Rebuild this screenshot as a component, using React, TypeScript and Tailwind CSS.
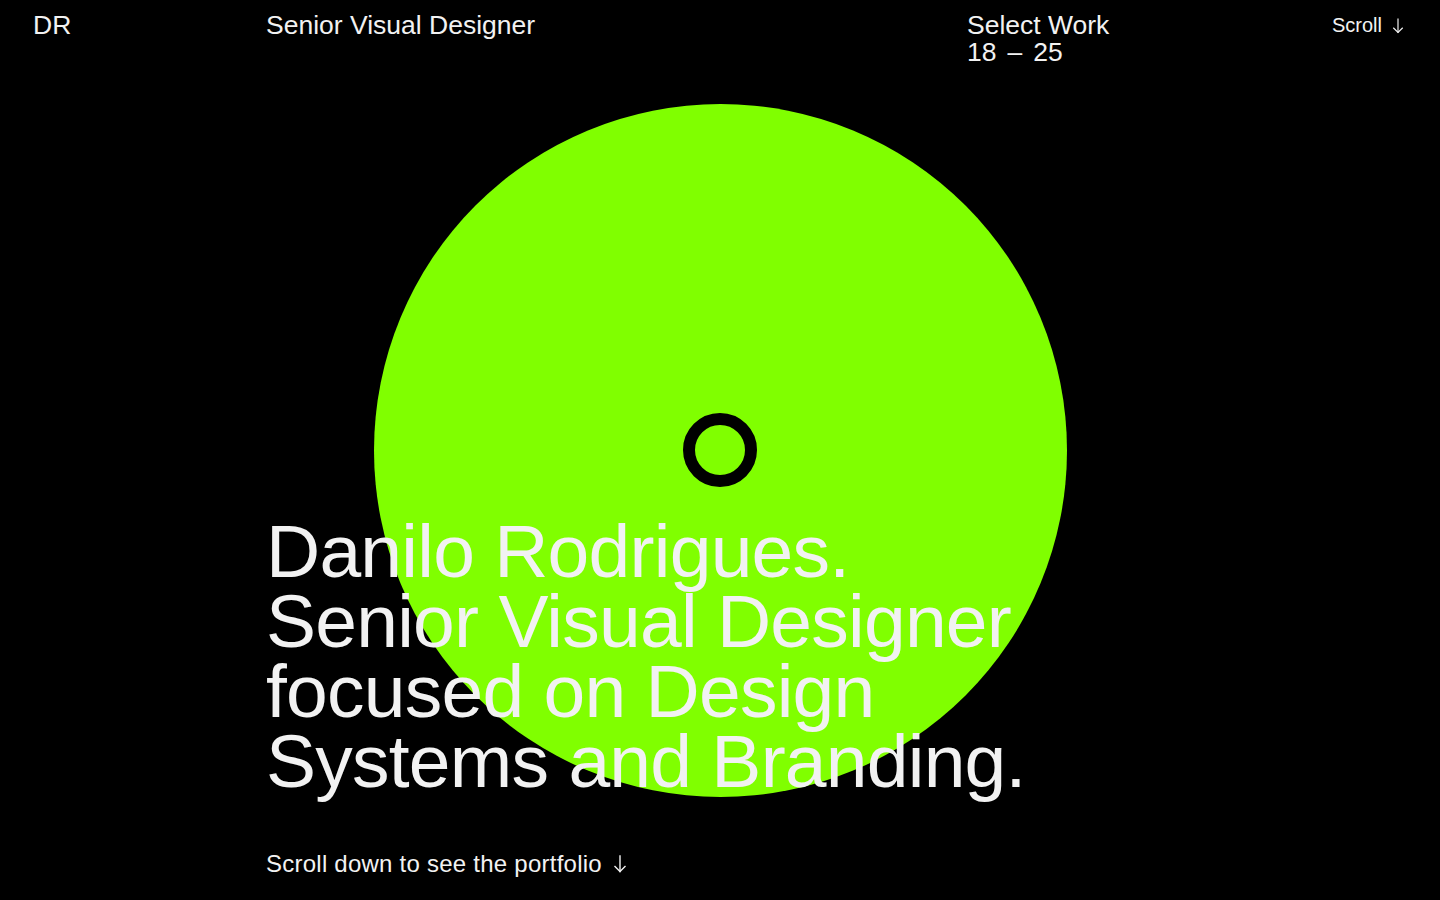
import React from "react";

function ArrowDown({ className = "" }: { className?: string }) {
  return (
    <svg
      viewBox="0 0 14 18"
      fill="none"
      stroke="currentColor"
      strokeWidth={1.4}
      strokeLinecap="square"
      className={className}
    >
      <path d="M7 1v15.5" />
      <path d="M1.5 11 7 16.5 12.5 11" strokeLinecap="butt" />
    </svg>
  );
}

export default function App() {
  return (
    <div
      className="relative flex h-[900px] w-full flex-col overflow-hidden bg-black text-[#f2f2f2]"
      style={{ fontFamily: '"Liberation Sans", Arial, sans-serif' }}
    >
      {/* Disc */}
      <div className="pointer-events-none absolute inset-0 flex items-center justify-center">
        <div className="flex h-[693px] w-[693px] items-center justify-center rounded-full bg-[#80ff00]">
          <div className="h-[74px] w-[74px] rounded-full border-[12px] border-black" />
        </div>
      </div>

      {/* Header */}
      <header className="relative z-10 flex pl-[33px] pr-[36px] pt-[12px] text-[26.5px] leading-[27px]">
        <div className="w-[233px]">DR</div>
        <div className="w-[701px]">Senior Visual Designer</div>
        <div className="flex flex-col">
          <span>Select Work</span>
          <span className="flex gap-[11px]">
            <span>18</span>
            <span>–</span>
            <span>25</span>
          </span>
        </div>
        <div className="ml-auto flex items-start gap-[10px] text-[20px] leading-[27px]">
          <span>Scroll</span>
          <ArrowDown className="mt-[6px] h-[16px] w-[12px]" />
        </div>
      </header>

      {/* Hero */}
      <main className="relative z-10 flex flex-1 flex-col justify-end pb-[21px] pl-[266px]">
        <h1 className="text-[75px] font-normal leading-[70px] tracking-[-0.01em]">
          Danilo Rodrigues.
          <br />
          Senior Visual Designer
          <br />
          focused on Design
          <br />
          Systems and Branding.
        </h1>
        <p className="mt-[53px] flex items-center gap-[11px] text-[24px] leading-[30px] tracking-[0.01em]">
          Scroll down to see the portfolio
          <ArrowDown className="h-[18px] w-[14px]" />
        </p>
      </main>
    </div>
  );
}
